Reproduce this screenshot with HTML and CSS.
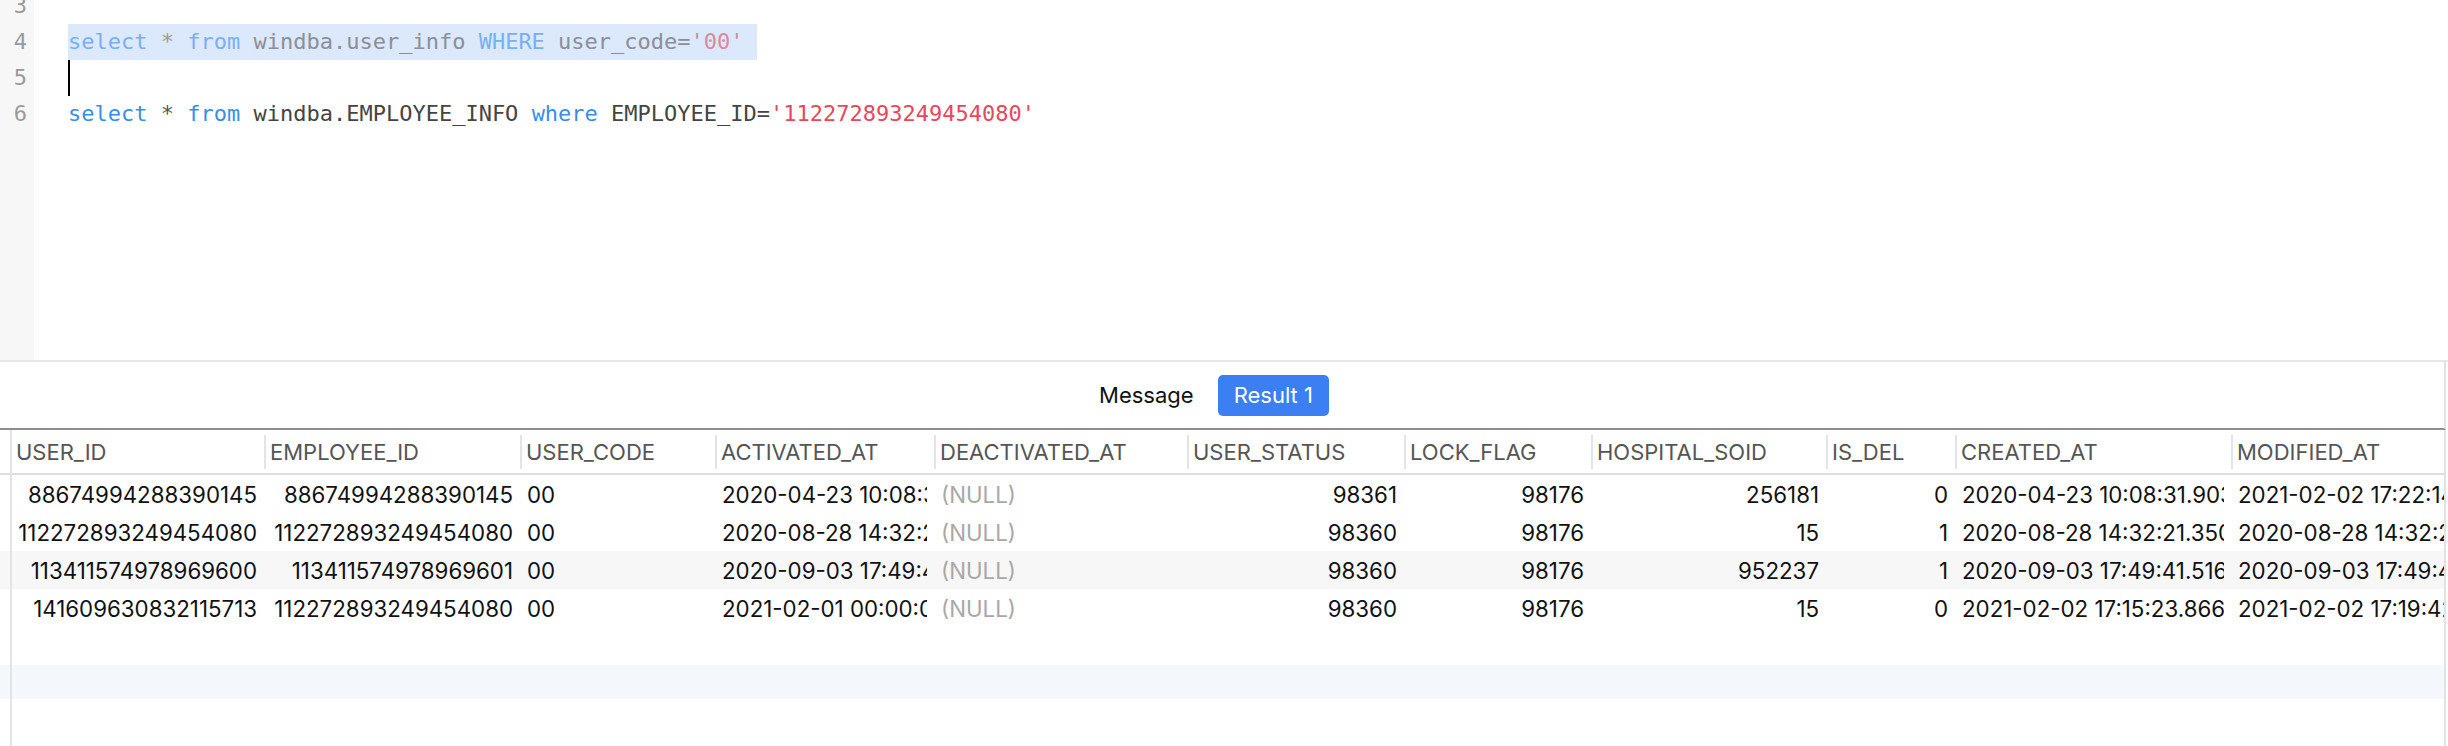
FILE: index.html
```html
<!DOCTYPE html>
<html>
<head>
<meta charset="utf-8">
<link rel="stylesheet" href="styles.css">
</head>
<body>
<div class="app">
  <div class="editor">
    <div class="gutter">
      <div class="ln">3</div>
      <div class="ln">4</div>
      <div class="ln">5</div>
      <div class="ln">6</div>
    </div>
    <div class="code">
      <div class="line"></div>
      <div class="line sel"><span class="kw">select</span> <span class="op">*</span> <span class="kw">from</span> windba.user_info <span class="kw">WHERE</span> user_code=<span class="str">'00'</span></div>
      <div class="line"><span class="caret"></span></div>
      <div class="line"><span class="kw">select</span> <span class="op">*</span> <span class="kw">from</span> windba.EMPLOYEE_INFO <span class="kw">where</span> EMPLOYEE_ID=<span class="str">'112272893249454080'</span></div>
    </div>
  </div>

  <div class="tabs">
    <button class="tab">Message</button>
    <button class="tab active">Result 1</button>
  </div>

  <div class="grid">
    <div class="row head">
      <div class="rh"></div>
      <div class="hc first c1"><span>USER_ID</span></div>
      <div class="hc c2"><span>EMPLOYEE_ID</span></div>
      <div class="hc c3"><span>USER_CODE</span></div>
      <div class="hc c4"><span>ACTIVATED_AT</span></div>
      <div class="hc c5"><span>DEACTIVATED_AT</span></div>
      <div class="hc c6"><span>USER_STATUS</span></div>
      <div class="hc c7"><span>LOCK_FLAG</span></div>
      <div class="hc c8"><span>HOSPITAL_SOID</span></div>
      <div class="hc c9"><span>IS_DEL</span></div>
      <div class="hc c10"><span>CREATED_AT</span></div>
      <div class="hc c11"><span>MODIFIED_AT</span></div>
    </div>

    <div class="row">
      <div class="rh"></div>
      <div class="dc num c1"><span>88674994288390145</span></div>
      <div class="dc num c2"><span>88674994288390145</span></div>
      <div class="dc c3"><span>00</span></div>
      <div class="dc c4"><span>2020-04-23 10:08:31.903</span></div>
      <div class="dc null c5"><span>(NULL)</span></div>
      <div class="dc num c6"><span>98361</span></div>
      <div class="dc num c7"><span>98176</span></div>
      <div class="dc num c8"><span>256181</span></div>
      <div class="dc num c9"><span>0</span></div>
      <div class="dc c10"><span>2020-04-23 10:08:31.903</span></div>
      <div class="dc c11"><span>2021-02-02 17:22:14.000</span></div>
    </div>

    <div class="row">
      <div class="rh"></div>
      <div class="dc num c1"><span>112272893249454080</span></div>
      <div class="dc num c2"><span>112272893249454080</span></div>
      <div class="dc c3"><span>00</span></div>
      <div class="dc c4"><span>2020-08-28 14:32:21.350</span></div>
      <div class="dc null c5"><span>(NULL)</span></div>
      <div class="dc num c6"><span>98360</span></div>
      <div class="dc num c7"><span>98176</span></div>
      <div class="dc num c8"><span>15</span></div>
      <div class="dc num c9"><span>1</span></div>
      <div class="dc c10"><span>2020-08-28 14:32:21.350</span></div>
      <div class="dc c11"><span>2020-08-28 14:32:21.350</span></div>
    </div>

    <div class="row stripe">
      <div class="rh"></div>
      <div class="dc num c1"><span>113411574978969600</span></div>
      <div class="dc num c2"><span>113411574978969601</span></div>
      <div class="dc c3"><span>00</span></div>
      <div class="dc c4"><span>2020-09-03 17:49:41.516</span></div>
      <div class="dc null c5"><span>(NULL)</span></div>
      <div class="dc num c6"><span>98360</span></div>
      <div class="dc num c7"><span>98176</span></div>
      <div class="dc num c8"><span>952237</span></div>
      <div class="dc num c9"><span>1</span></div>
      <div class="dc c10"><span>2020-09-03 17:49:41.516</span></div>
      <div class="dc c11"><span>2020-09-03 17:49:41.516</span></div>
    </div>

    <div class="row">
      <div class="rh"></div>
      <div class="dc num c1"><span>141609630832115713</span></div>
      <div class="dc num c2"><span>112272893249454080</span></div>
      <div class="dc c3"><span>00</span></div>
      <div class="dc c4"><span>2021-02-01 00:00:00.000</span></div>
      <div class="dc null c5"><span>(NULL)</span></div>
      <div class="dc num c6"><span>98360</span></div>
      <div class="dc num c7"><span>98176</span></div>
      <div class="dc num c8"><span>15</span></div>
      <div class="dc num c9"><span>0</span></div>
      <div class="dc c10"><span>2021-02-02 17:15:23.866</span></div>
      <div class="dc c11"><span>2021-02-02 17:19:42.000</span></div>
    </div>

    <div class="row empty"><div class="rh"></div></div>
    <div class="row empty hover"><div class="rh"></div></div>
    <div class="row empty fill"><div class="rh"></div></div>
  </div>
</div>
</body>
</html>
```

FILE: styles.css
```css
* { box-sizing: border-box; }
html, body {
  margin: 0;
  padding: 0;
  background: #fff;
  width: 2448px;
  height: 746px;
  overflow: hidden;
}
.app {
  width: 2448px;
  height: 746px;
  display: flex;
  flex-direction: column;
  overflow: hidden;
}

/* ---------- editor ---------- */
.editor {
  height: 362px;
  flex: none;
  display: flex;
  border-bottom: 2px solid #e6e6e6;
  overflow: hidden;
  font-family: "DejaVu Sans Mono", "Liberation Mono", monospace;
  font-size: 22px;
  line-height: 36px;
}
.gutter {
  width: 34px;
  flex: none;
  background: #f7f7f7;
  color: #9a9a9a;
  text-align: right;
  padding-right: 7px;
}
.gutter .ln { height: 36px; }
.gutter > :first-child, .code > :first-child { margin-top: -12px; }
.code {
  flex: 1;
  padding-left: 34px;
  color: #444;
}
.line { height: 36px; white-space: pre; }
.line .kw { color: #3a8ee8; }
.line .op { color: #555; }
.line .str { color: #e8475e; }
.line.sel {
  width: 689px;
  background: #dce8fb;
  color: #8a8f98;
}
.line.sel .kw { color: #78b0f2; }
.line.sel .op { color: #9a9a9a; }
.line.sel .str { color: #d98a9e; }
.caret {
  display: inline-block;
  width: 2px;
  height: 36px;
  background: #000;
  vertical-align: top;
}

/* ---------- tabs ---------- */
.tabs {
  height: 68px;
  flex: none;
  display: flex;
  align-items: center;
  justify-content: center;
  gap: 8px;
  padding-right: 32px;
  border-bottom: 2px solid #8e8e8e;
  border-right: 2px solid #e2e2e2;
  margin-right: 2px;
}
.tab {
  font-family: Inter, "Liberation Sans", sans-serif;
  font-size: 22px;
  height: 41px;
  padding: 0 16px;
  border: none;
  border-radius: 5px;
  background: transparent;
  color: #111;
}
.tab.active {
  background: #3b7ff2;
  color: #fff;
}

/* ---------- grid ---------- */
.grid {
  flex: 1;
  display: flex;
  flex-direction: column;
  font-family: Inter, "Liberation Sans", sans-serif;
  font-size: 22.3px;
  overflow: hidden;
  border-right: 2px solid #e2e2e2;
  margin-right: 2px;
}
.row {
  display: flex;
  height: 38px;
  flex: none;
  align-items: center;
}
.row.head {
  height: 45px;
  border-bottom: 2px solid #dedede;
  color: #555;
  font-size: 22px;
}
.row.stripe { background: #f7f7f7; }
.row.hover { background: #f4f8fd; height: 34px; }
.row.fill { flex: 1; }
.rh {
  width: 12px;
  flex: none;
  align-self: stretch;
  border-right: 2px solid #e4e4e4;
}
.row.head .rh { margin-bottom: -2px; }

.hc, .dc { flex: none; white-space: nowrap; }
.hc span, .dc span { display: block; overflow: hidden; }
.hc {
  height: 34px;
  display: flex;
  align-items: center;
  border-left: 2px solid #e4e4e4;
  padding-left: 4px;
}
.hc.first { border-left: none; padding-left: 4px; }
.dc { padding: 0 7px; }
.dc.num { padding-left: 2px; }
.dc.num span { text-align: right; }
.row .dc { color: #111; }
.row .dc.null { color: #a8a8a8; }

.c1 { width: 252px; }
.c2 { width: 256px; }
.c3 { width: 195px; }
.c4 { width: 219px; }
.c5 { width: 253px; }
.c6 { width: 217px; }
.c7 { width: 187px; }
.c8 { width: 235px; }
.c9 { width: 129px; }
.c10 { width: 276px; }
.c11 { width: 260px; }
```
